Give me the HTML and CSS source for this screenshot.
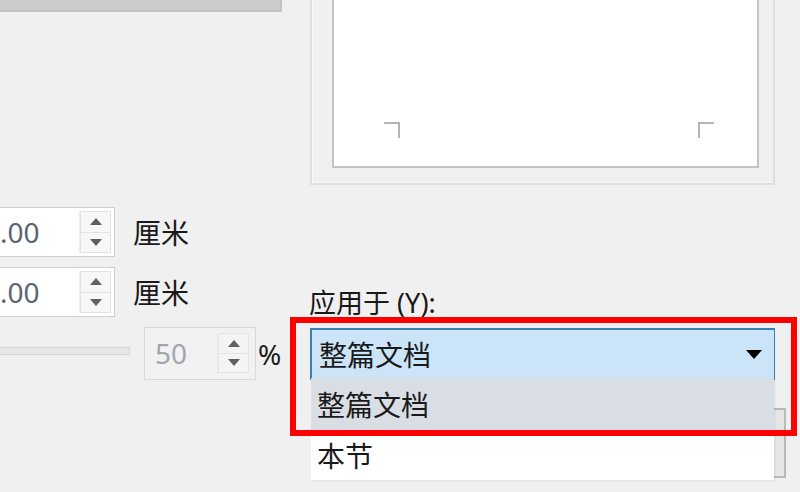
FILE: index.html
```html
<!DOCTYPE html>
<html lang="zh-CN">
<head>
<meta charset="utf-8">
<title>页面设置</title>
<link rel="stylesheet" href="styles.css">
</head>
<body>
<div class="dialog">
  <div class="col-left">
    <div class="topbar"></div>
    <div class="field-row first">
      <div class="spin">
        <span class="val">.00</span>
        <div class="spin-btns"><span class="btn"><i class="tri up"></i></span><span class="btn"><i class="tri down"></i></span></div>
      </div>
      <span class="unit">厘米</span>
    </div>
    <div class="field-row">
      <div class="spin">
        <span class="val">.00</span>
        <div class="spin-btns"><span class="btn"><i class="tri up"></i></span><span class="btn"><i class="tri down"></i></span></div>
      </div>
      <span class="unit">厘米</span>
    </div>
    <div class="scale-row">
      <div class="track"></div>
      <div class="spin small disabled">
        <span class="val">50</span>
        <div class="spin-btns"><span class="btn"><i class="tri up"></i></span><span class="btn"><i class="tri down"></i></span></div>
      </div>
      <span class="pct">%</span>
    </div>
  </div>
  <div class="col-right">
    <div class="preview">
      <div class="page">
        <span class="mark left"></span>
        <span class="mark right"></span>
      </div>
    </div>
    <div class="apply-label">应用于 (Y):</div>
    <div class="combo-wrap">
      <div class="combo">
        <span class="combo-text">整篇文档</span>
        <svg class="arrow" width="16" height="9" viewBox="0 0 16 9"><path d="M0 0H16L8 9Z" fill="#000"/></svg>
      </div>
      <ul class="dropdown">
        <li class="item hover">整篇文档</li>
        <li class="item">本节</li>
      </ul>
    </div>
    <div class="behind-box"></div>
  </div>
  <div class="highlight"></div>
</div>
</body>
</html>
```
FILE: styles.css
```css
html, body {
  margin: 0;
  padding: 0;
  background: #f0f0f0;
  width: 800px;
  height: 492px;
  overflow: hidden;
}
body {
  font-family: "Noto Sans", "Noto Sans CJK SC", sans-serif;
  color: #1a1a1a;
}
.dialog {
  position: relative;
  display: grid;
  grid-template-columns: 300px 465px;
  column-gap: 10px;
  height: 492px;
}
.col-left {
  display: flex;
  flex-direction: column;
}
.topbar {
  width: 280px;
  height: 10px;
  background: #cbcbcb;
  border-right: 2px solid #c2c2c2;
  border-bottom: 2px solid #c2c2c2;
}
.field-row {
  display: flex;
  align-items: center;
  gap: 18px;
  margin-top: 10px;
}
.field-row.first {
  margin-top: 195px;
}
.spin {
  box-sizing: border-box;
  display: flex;
  align-items: stretch;
  width: 117px;
  height: 50px;
  margin-left: -2px;
  background: #fff;
  border: 1px solid #cfcfcf;
  padding: 3px 3px 3px 0;
}
.val {
  flex: 1;
  display: flex;
  align-items: center;
  font-size: 28px;
  color: #5c6470;
  padding-left: 1px;
}
.spin-btns {
  width: 31px;
  display: flex;
  flex-direction: column;
  border-left: 1px solid #ececec;
}
.btn {
  flex: 1;
  display: flex;
  align-items: center;
  justify-content: center;
  border: 1px solid #e2e2e2;
  background: #f7f7f7;
}
.btn + .btn {
  border-top: none;
}
.tri {
  width: 0;
  height: 0;
  border-left: 6px solid transparent;
  border-right: 6px solid transparent;
}
.tri.up {
  border-bottom: 7px solid #606060;
}
.tri.down {
  border-top: 7px solid #606060;
}
.unit {
  font-family: "Noto Sans CJK SC", sans-serif;
  font-size: 28px;
  color: #1a1a1a;
}
.scale-row {
  display: flex;
  align-items: center;
  margin-top: 10px;
  height: 53px;
}
.track {
  box-sizing: border-box;
  width: 130px;
  height: 8px;
  margin-top: -6px;
  background: #e7e7e7;
  border: 1px solid #d6d6d6;
  border-left: none;
}
.spin.small {
  width: 112px;
  height: 53px;
  margin-left: 14px;
  padding: 5px 6px 6px 0;
}
.spin.disabled {
  background: #f2f2f2;
  border-color: #d8d8d8;
}
.spin.disabled .val {
  color: #a0a6ad;
  padding-left: 10px;
}
.spin.disabled .btn {
  background: #f4f4f4;
  border-color: #e4e4e4;
}
.pct {
  font-size: 28px;
  margin-left: 2px;
  color: #1a1a1a;
}
.col-right {
  display: flex;
  flex-direction: column;
}
.preview {
  box-sizing: border-box;
  height: 185px;
  border: 2px solid #dedede;
  border-top: none;
  box-shadow: inset 1px -1px 0 #f9f9f9;
  padding: 0 14px 15px 20px;
}
.page {
  box-sizing: border-box;
  height: 100%;
  background: #fff;
  border: 2px solid #c4c4c4;
  border-top: none;
  display: flex;
  align-items: flex-end;
  justify-content: space-between;
  padding: 0 43px 28px 50px;
}
.mark {
  width: 14px;
  height: 14px;
  border-top: 2px solid #b5b5b5;
}
.mark.left {
  border-right: 2px solid #b5b5b5;
}
.mark.right {
  border-left: 2px solid #b5b5b5;
}
.apply-label {
  font-family: "Noto Sans", "Noto Sans CJK SC", sans-serif;
  font-size: 27px;
  line-height: 30px;
  margin-top: 103px;
  margin-left: -1px;
  color: #1a1a1a;
}
.combo-wrap {
  position: relative;
  margin-top: 10px;
}
.combo {
  box-sizing: border-box;
  height: 52px;
  display: flex;
  align-items: center;
  justify-content: space-between;
  background: #cce4f7;
  border: 2px solid #3c7fb1;
  border-right-width: 1px;
  padding: 0 12px 0 7px;
}
.combo-text, .item {
  font-family: "Noto Sans CJK SC", sans-serif;
  font-size: 28px;
  color: #1a1a1a;
}
.arrow {
  display: block;
}
.dropdown {
  position: absolute;
  z-index: 2;
  left: 1px;
  right: 1px;
  top: 50px;
  margin: 0;
  padding: 0;
  list-style: none;
  background: #fff;
  box-shadow: 1px 1px 2px rgba(0, 0, 0, 0.08);
}
.item {
  height: 50px;
  display: flex;
  align-items: center;
  padding-left: 6px;
}
.item.hover {
  background: #d9dee5;
  height: 52px;
}
.behind-box {
  box-sizing: border-box;
  align-self: flex-end;
  width: 110px;
  height: 70px;
  margin-top: 28px;
  margin-right: -11px;
  background: #e6e6e6;
  border: 2px solid #b9b9b9;
}
.highlight {
  position: absolute;
  z-index: 3;
  left: 290px;
  top: 317px;
  width: 507px;
  height: 119px;
  box-sizing: border-box;
  border: 6px solid #ff0000;
}
```
